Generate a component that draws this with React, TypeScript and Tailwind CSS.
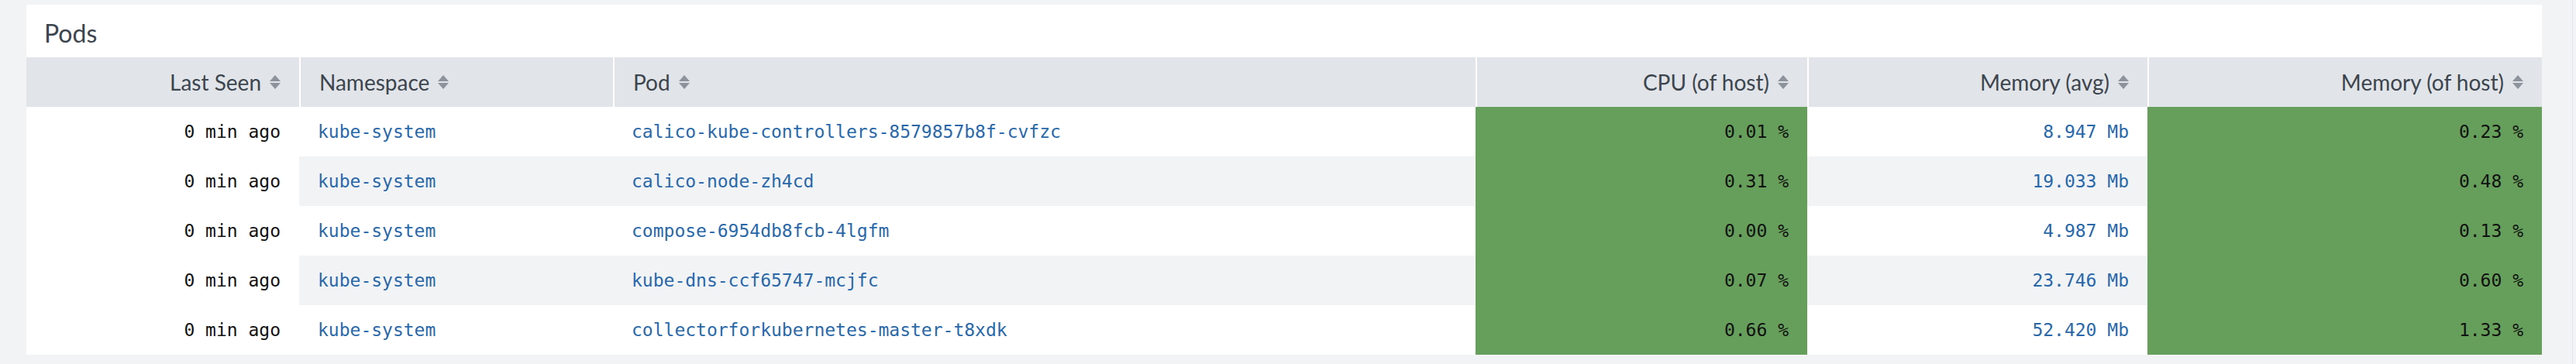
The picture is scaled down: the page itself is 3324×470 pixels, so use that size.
import React from "react";

interface PodRow {
  namespace: string;
  pod: string;
  cpu: string;
  memAvg: string;
  memHost: string;
}

const ROWS: PodRow[] = [
  { namespace: "kube-system", pod: "calico-kube-controllers-8579857b8f-cvfzc", cpu: "0.01 %", memAvg: "8.947 Mb", memHost: "0.23 %" },
  { namespace: "kube-system", pod: "calico-node-zh4cd", cpu: "0.31 %", memAvg: "19.033 Mb", memHost: "0.48 %" },
  { namespace: "kube-system", pod: "compose-6954db8fcb-4lgfm", cpu: "0.00 %", memAvg: "4.987 Mb", memHost: "0.13 %" },
  { namespace: "kube-system", pod: "kube-dns-ccf65747-mcjfc", cpu: "0.07 %", memAvg: "23.746 Mb", memHost: "0.60 %" },
  { namespace: "kube-system", pod: "collectorforkubernetes-master-t8xdk", cpu: "0.66 %", memAvg: "52.420 Mb", memHost: "1.33 %" },
];

const COLUMNS = [
  { label: "Last Seen", right: true },
  { label: "Namespace", right: false },
  { label: "Pod", right: false },
  { label: "CPU (of host)", right: true },
  { label: "Memory (avg)", right: true },
  { label: "Memory (of host)", right: true },
];

function SortIcon() {
  return (
    <svg width="14" height="18" viewBox="0 0 14 18" className="shrink-0">
      <path d="M7 0 L14 8 L0 8 Z" fill="#8c939b" />
      <path d="M0 10 L14 10 L7 18 Z" fill="#8c939b" />
    </svg>
  );
}

const mono = "font-['DejaVu_Sans_Mono','Liberation_Mono',monospace] text-[23px]";
const cell = "h-[64px] flex items-center px-[24px] whitespace-nowrap";

export default function App() {
  return (
    <div className="min-h-screen w-[3324px] bg-[#f2f3f5] font-['Lato','Open_Sans',sans-serif]">
      <div className="w-[3320px] min-h-screen border-r border-[#e3e5e8] pt-[6px] pl-[34px]">
        <div className="w-[3246px] bg-white">
          {/* Title */}
          <div className="h-[68px] pt-[18px] pl-[23px] text-[32px] leading-[38px] text-[#3c444d]">
            Pods
          </div>

          {/* Table */}
          <div className="grid grid-cols-[352px_405px_1113px_428px_439px_509px]">
            {COLUMNS.map((col, i) => (
              <div
                key={col.label}
                className={`${cell} gap-[11px] bg-[#e1e4e8] text-[28px] text-[#3c444d] ${
                  i > 0 ? "border-l-2 border-white" : ""
                } ${col.right ? "justify-end" : "justify-start"}`}
              >
                <span>{col.label}</span>
                <SortIcon />
              </div>
            ))}

            {ROWS.map((row, r) => {
              const stripe = r % 2 === 1 ? "bg-[#f2f3f5]" : "bg-white";
              return (
                <React.Fragment key={row.pod}>
                  <div className={`${cell} ${mono} justify-end bg-white text-[#111]`}>0 min ago</div>
                  <div className={`${cell} ${mono} ${stripe} text-[#2868aa]`}>{row.namespace}</div>
                  <div className={`${cell} ${mono} ${stripe} text-[#2868aa]`}>{row.pod}</div>
                  <div className={`${cell} ${mono} justify-end bg-[#669f5b] text-[#111]`}>{row.cpu}</div>
                  <div className={`${cell} ${mono} justify-end ${stripe} text-[#2868aa]`}>{row.memAvg}</div>
                  <div className={`${cell} ${mono} justify-end bg-[#669f5b] text-[#111]`}>{row.memHost}</div>
                </React.Fragment>
              );
            })}
          </div>
        </div>
      </div>
    </div>
  );
}
